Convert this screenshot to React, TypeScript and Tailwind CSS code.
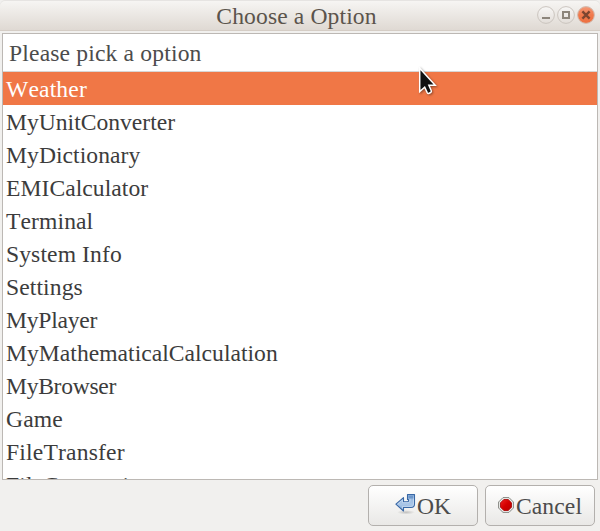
const options = [
  { name: "Weather", tracking: "tracking-[0.14px]" },
  { name: "MyUnitConverter", tracking: "tracking-normal" },
  { name: "MyDictionary", tracking: "tracking-[0.05px]" },
  { name: "EMICalculator", tracking: "tracking-[0.05px]" },
  { name: "Terminal", tracking: "tracking-[0.1px]" },
  { name: "System Info", tracking: "tracking-[0.1px]" },
  { name: "Settings", tracking: "tracking-[0.1px]" },
  { name: "MyPlayer", tracking: "tracking-[-0.25px]" },
  { name: "MyMathematicalCalculation", tracking: "tracking-[0.02px]" },
  { name: "MyBrowser", tracking: "tracking-[-0.3px]" },
  { name: "Game", tracking: "tracking-[0.1px]" },
  { name: "FileTransfer", tracking: "tracking-[0.18px]" },
  { name: "FileConversion", tracking: "tracking-[0.1px]" },
];

function WindowControls() {
  return (
    <svg width="60" height="20" viewBox="0 0 60 20" className="block">
      <defs>
        <linearGradient id="ctl" x1="0" y1="0" x2="0" y2="1">
          <stop offset="0" stopColor="#f8f7f6" />
          <stop offset="1" stopColor="#e2ddd8" />
        </linearGradient>
        <linearGradient id="close" x1="0" y1="0" x2="0" y2="1">
          <stop offset="0" stopColor="#f59a78" />
          <stop offset="0.5" stopColor="#f0794c" />
          <stop offset="1" stopColor="#ee7040" />
        </linearGradient>
      </defs>
      <circle cx="10" cy="10" r="8.4" fill="url(#ctl)" stroke="#cbc5bf" />
      <circle cx="30" cy="10" r="8.4" fill="url(#ctl)" stroke="#cbc5bf" />
      <circle cx="50" cy="10" r="8.4" fill="url(#close)" stroke="#d2bdb2" />
      <rect x="6" y="12" width="8" height="2" fill="#8c857b" />
      <rect x="27" y="7" width="6" height="6" fill="none" stroke="#8c857b" strokeWidth="2" />
      <path d="M46.4 6.4l7.2 7.2M53.6 6.4l-7.2 7.2" stroke="#7c4530" strokeWidth="2.4" />
    </svg>
  );
}

function ReturnIcon() {
  return (
    <svg width="22" height="22" viewBox="0 0 22 22" className="block shrink-0">
      <defs>
        <linearGradient id="arrow" x1="0" y1="0" x2="0" y2="1">
          <stop offset="0" stopColor="#8db1da" />
          <stop offset="0.6" stopColor="#a9c6e8" />
          <stop offset="1" stopColor="#7ca4d3" />
        </linearGradient>
        <radialGradient id="shade">
          <stop offset="0" stopColor="#000" stopOpacity="0.2" />
          <stop offset="1" stopColor="#000" stopOpacity="0" />
        </radialGradient>
      </defs>
      <ellipse cx="11" cy="19.3" rx="9" ry="2.2" fill="url(#shade)" />
      <path
        d="M12.5 1.500h7v9.500q0 3.500-3.500 3.500H8.500v3.500L.9 11.200 8.500 4.700v4h4q1 0 1-1V6.500h-1z"
        fill="url(#arrow)"
        stroke="#3867a5"
        strokeWidth="1.1"
        strokeLinejoin="round"
      />
      <path d="M2.600 11.200L7.500 7v2.700h5.500q2 0 2-2V5.500M18.500 3v8q0 2.400-2.500 2.400H7.500V15.700" fill="none" stroke="#c8dbf1" strokeWidth="0.8" />
      <path d="M13.500 2.500h5v3h-5z" fill="#6c96ca" />
    </svg>
  );
}

function StopIcon() {
  return (
    <svg width="16" height="16" viewBox="0 0 16 16" className="block shrink-0">
      <defs>
        <linearGradient id="stop" x1="0" y1="0" x2="1" y2="1">
          <stop offset="0" stopColor="#ef2222" />
          <stop offset="0.5" stopColor="#d40000" />
          <stop offset="1" stopColor="#b80000" />
        </linearGradient>
      </defs>
      <path d="M5 .6h6L15.400 5v6L11 15.400H5L.6 11V5z" fill="#eeeeec" stroke="#858782" strokeWidth="1" />
      <path d="M5.800 2.500h4.400l3.300 3.300v4.400l-3.300 3.300H5.800l-3.300-3.300V5.800z" fill="url(#stop)" stroke="#a40000" strokeWidth="0.8" />
    </svg>
  );
}

function Pointer() {
  return (
    <svg width="24" height="32" viewBox="0 0 24 32" className="pointer-events-none absolute left-[417px] top-[66px] drop-shadow-[1px_1px_1px_rgba(0,0,0,0.4)]">
      <path
        d="M2.700 2.200v23.300l5-4.300 2.500 5.400q.7 1.200 2 .6l1.400-.7q1.200-.7.6-2l-2.300-5.200h6.300z"
        fill="#111"
        stroke="#fff"
        strokeWidth="1.500"
      />
    </svg>
  );
}

export default function App() {
  return (
    <div className="relative flex h-[531px] w-[600px] flex-col overflow-hidden bg-[#f1f0ee] font-['Liberation_Serif',serif] text-[23.6px] text-[#3c3c3c] [font-kerning:none]">
      <header className="relative flex h-[31px] shrink-0 items-center justify-center rounded-t-[5px] border-b border-[#d5cdc5] bg-linear-to-b from-[#f7f6f4] to-[#dfd9d3] pr-[7px] text-[#5b544c] shadow-[inset_0_1px_0_#e6e4e2]">
        <h1 className="pt-[2px] leading-[30px] tracking-[0.12px]">Choose a Option</h1>
        <div className="absolute right-1 top-[5px]">
          <WindowControls />
        </div>
      </header>

      <main className="mx-[2px] mt-[2px] flex h-[447px] shrink-0 flex-col overflow-hidden border border-[#bcb8b4] bg-white">
        <div className="h-[38px] shrink-0 border-b border-[#d8d6d4] pl-[6px] leading-[39px] tracking-[0.16px] text-[#4c4c4c]">
          Please pick a option
        </div>
        <ul>
          {options.map(({ name, tracking }, i) => (
            <li
              key={name}
              className={`h-[33px] pl-[3px] leading-[34px] ${tracking} ${i === 0 ? "bg-[#f07746] text-white" : ""}`}
            >
              {name}
            </li>
          ))}
        </ul>
      </main>

      <footer className="mt-[5px] flex justify-end gap-[7px] pr-[5px] text-[#4c4c4c]">
        <button className="flex h-[41px] w-[110px] items-center justify-center rounded-[5px] border border-[#b3b0ad] bg-linear-to-b from-white to-[#e9e8e6]">
          <span className="-mt-1">
            <ReturnIcon />
          </span>
          <span className="pt-[2px]">OK</span>
        </button>
        <button className="flex h-[41px] w-[110px] items-center justify-center gap-[2px] rounded-[5px] border border-[#b3b0ad] bg-linear-to-b from-white to-[#e9e8e6]">
          <span className="-mt-[2px]">
            <StopIcon />
          </span>
          <span className="pt-[2px] tracking-[0.1px]">Cancel</span>
        </button>
      </footer>

      <Pointer />
    </div>
  );
}
